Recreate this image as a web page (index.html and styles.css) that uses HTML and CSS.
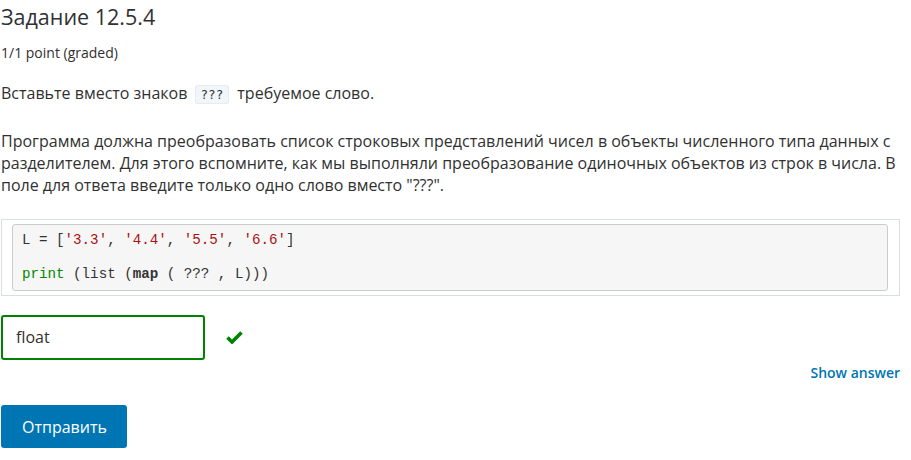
FILE: index.html
```html
<!DOCTYPE html>
<html lang="ru">
<head>
<meta charset="utf-8">
<link rel="stylesheet" href="styles.css">
</head>
<body>
<div class="problem">
  <h3 class="title">Задание 12.5.4</h3>
  <div class="points">1/1 point (graded)</div>
  <p class="lead">Вставьте вместо знаков <code class="inline">???</code> требуемое слово.</p>
  <p class="desc">Программа должна преобразовать список строковых представлений чисел в объекты численного типа данных с разделителем. Для этого вспомните, как мы выполняли преобразование одиночных объектов из строк в числа. В поле для ответа введите только одно слово вместо "???".</p>
  <div class="code-outer">
    <pre class="code"><span class="n">L</span> <span class="o">=</span> <span class="p">[</span><span class="s">'3.3'</span><span class="p">,</span> <span class="s">'4.4'</span><span class="p">,</span> <span class="s">'5.5'</span><span class="p">,</span> <span class="s">'6.6'</span><span class="p">]</span>

<span class="k">print</span> <span class="p">(</span>list <span class="p">(</span><span class="b">map</span> <span class="p">(</span> ??? , L<span class="p">)))</span></pre>
  </div>
  <div class="answer-row">
    <div class="answer-input">float</div>
    <svg class="check" width="17" height="13" viewBox="0 0 17 13"><path d="M1.5 6.5 L6 11 L15.5 1.5" fill="none" stroke="#008100" stroke-width="3.6"/></svg>
  </div>
  <div class="show-row"><span class="show">Show answer</span></div>
  <button class="submit">Отправить</button>
</div>
</body>
</html>
```
FILE: styles.css
```css
html, body { margin: 0; padding: 0; background: #fff; }
body { font-family: "Open Sans", "Noto Sans", sans-serif; color: #313131; }
.problem { padding: 0 11px 0 1px; }
.title { margin: 0; padding-top: 3px; font-size: 21.5px; font-weight: 400; line-height: 28px; color: #313131; }
.points { margin-top: 13px; font-size: 14px; line-height: 18px; color: #313131; }
.lead { margin: 20px 0 0; font-size: 16px; line-height: 22px; }
.inline { font-family: "DejaVu Sans Mono", monospace; font-size: 12.5px; background: #f1f6fb; border: 1px solid #e5ebf0; border-radius: 3px; padding: 1px 5px; margin: 0 4px 0 3px; color: #313131; }
.desc { margin: 24px 0 0; font-size: 16px; line-height: 22px; }
.code-outer { margin-top: 23px; border: 1px solid #d9dede; padding: 4px 11px 4px 10px; }
.code { margin: 0; background: #f6f6f6; border: 1px solid #ccc; border-radius: 3px; padding: 7px 10px 7px 9px; font-family: "Liberation Mono", "Courier New", monospace; font-size: 14.2px; line-height: 17px; color: #333; }
.code .s { color: #a11; }
.code .k { color: #080; }
.code .b { font-weight: bold; }
.answer-row { display: flex; align-items: center; margin-top: 19px; }
.answer-input { width: 174px; height: 41px; border: 2px solid #008100; border-radius: 3px; padding: 0 13px; font-size: 16px; line-height: 41px; color: #313131; }
.check { margin-left: 21px; }
.show-row { display: flex; justify-content: flex-end; margin-top: 3px; }
.show { font-size: 14px; font-weight: 600; color: #0075b4; line-height: 20px; }
.submit { display: block; margin-top: 22px; background: #0075b4; color: #fff; border: none; border-radius: 3px; font-family: inherit; font-size: 16px; padding: 0 21px; height: 43px; width: 126px; }
```
